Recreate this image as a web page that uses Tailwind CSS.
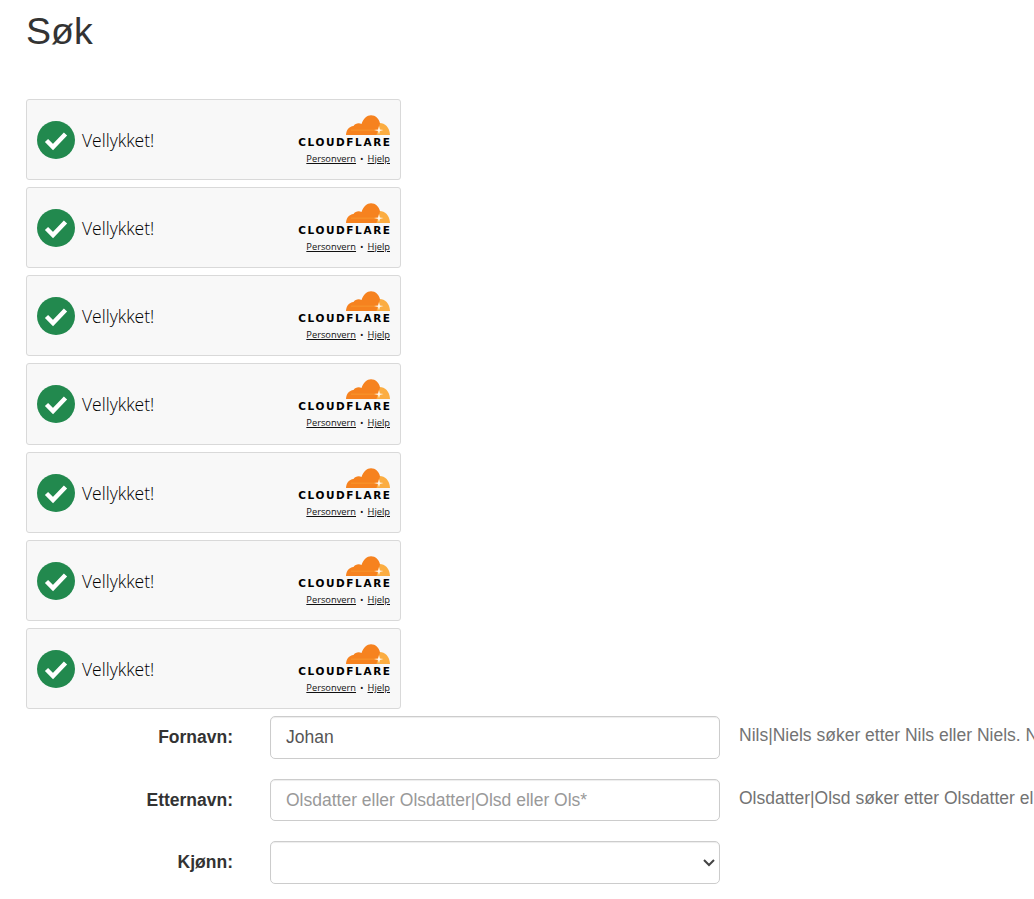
<!DOCTYPE html>
<html lang="no">
<head>
    <meta charset="utf-8">
    <title>Søk</title>
    <script src="https://cdn.jsdelivr.net/npm/@tailwindcss/browser@4"></script>
</head>
<body class="bg-white overflow-hidden h-[899px] font-['Liberation_Sans',sans-serif] text-[17.5px] text-[#333]">
    <svg class="hidden">
        <symbol id="ok" viewBox="0 0 38 38">
            <circle cx="19" cy="19" r="19" fill="#22894e"/>
            <path d="M9.500 19.500l6.500 6.500 12.500-13" fill="none" stroke="#fff" stroke-width="4.500"/>
        </symbol>
        <symbol id="cf" viewBox="0 0 44 20">
            <path d="M31 8.500c6-1.800 12.500 2.500 13 11.500H29z" fill="#fbad41"/>
            <path d="M0 20c.3-5 3-8.500 7.500-9 1.500-2.200 5-3.500 8-2C17.500 3.500 21 .2 25 .2c4.500 0 8 3.300 9 8-.8 3-1.500 6.300-2.500 8L30.500 20z" fill="#f6821f"/>
            <path d="M5 14.700h26v.8H5z" fill="#fbad41" opacity=".6"/>
            <path d="M28 15.100l4-.7 1-3.400 .9 3.400 3.600.7-3.600.8-.9 3.400-1-3.400z" fill="#fff" opacity=".9"/>
        </symbol>
    </svg>

    <main class="pl-[26px]">
        <h1 class="text-[37.5px] leading-[41px] font-normal pt-[11px] mb-[46.6px]">Søk</h1>

        <div class="w-[375px]">
            <div class="h-[81.25px] mb-[7px] flex items-center justify-between pl-[10px] pr-[10px] bg-[#f8f8f8] border border-[#d9d9d9] rounded-[3px]">
                <div class="flex items-center gap-[7px] pt-[1px]">
                    <svg class="w-[38px] h-[38px]"><use href="#ok"/></svg>
                    <span class="font-['Open_Sans',sans-serif] font-light text-[17.5px] text-black">Vellykket!</span>
                </div>
                <div class="flex flex-col items-end pt-[1px]">
                    <svg class="w-[44px] h-[20px]"><use href="#cf"/></svg>
                    <span class="font-['DejaVu_Sans',sans-serif] font-bold text-[10.500px] leading-[12px] tracking-[1.600px] text-black mr-[-1.600px] mt-[1px]">CLOUDFLARE</span>
                    <div class="flex items-center gap-[4px] mt-[5px] font-['Open_Sans',sans-serif] text-[9.300px] leading-[12px] text-[#111]"><a class="underline">Personvern</a><span>•</span><a class="underline">Hjelp</a></div>
                </div>
            </div>
            <div class="h-[81.25px] mb-[7px] flex items-center justify-between pl-[10px] pr-[10px] bg-[#f8f8f8] border border-[#d9d9d9] rounded-[3px]">
                <div class="flex items-center gap-[7px] pt-[1px]">
                    <svg class="w-[38px] h-[38px]"><use href="#ok"/></svg>
                    <span class="font-['Open_Sans',sans-serif] font-light text-[17.5px] text-black">Vellykket!</span>
                </div>
                <div class="flex flex-col items-end pt-[1px]">
                    <svg class="w-[44px] h-[20px]"><use href="#cf"/></svg>
                    <span class="font-['DejaVu_Sans',sans-serif] font-bold text-[10.500px] leading-[12px] tracking-[1.600px] text-black mr-[-1.600px] mt-[1px]">CLOUDFLARE</span>
                    <div class="flex items-center gap-[4px] mt-[5px] font-['Open_Sans',sans-serif] text-[9.300px] leading-[12px] text-[#111]"><a class="underline">Personvern</a><span>•</span><a class="underline">Hjelp</a></div>
                </div>
            </div>
            <div class="h-[81.25px] mb-[7px] flex items-center justify-between pl-[10px] pr-[10px] bg-[#f8f8f8] border border-[#d9d9d9] rounded-[3px]">
                <div class="flex items-center gap-[7px] pt-[1px]">
                    <svg class="w-[38px] h-[38px]"><use href="#ok"/></svg>
                    <span class="font-['Open_Sans',sans-serif] font-light text-[17.5px] text-black">Vellykket!</span>
                </div>
                <div class="flex flex-col items-end pt-[1px]">
                    <svg class="w-[44px] h-[20px]"><use href="#cf"/></svg>
                    <span class="font-['DejaVu_Sans',sans-serif] font-bold text-[10.500px] leading-[12px] tracking-[1.600px] text-black mr-[-1.600px] mt-[1px]">CLOUDFLARE</span>
                    <div class="flex items-center gap-[4px] mt-[5px] font-['Open_Sans',sans-serif] text-[9.300px] leading-[12px] text-[#111]"><a class="underline">Personvern</a><span>•</span><a class="underline">Hjelp</a></div>
                </div>
            </div>
            <div class="h-[81.25px] mb-[7px] flex items-center justify-between pl-[10px] pr-[10px] bg-[#f8f8f8] border border-[#d9d9d9] rounded-[3px]">
                <div class="flex items-center gap-[7px] pt-[1px]">
                    <svg class="w-[38px] h-[38px]"><use href="#ok"/></svg>
                    <span class="font-['Open_Sans',sans-serif] font-light text-[17.5px] text-black">Vellykket!</span>
                </div>
                <div class="flex flex-col items-end pt-[1px]">
                    <svg class="w-[44px] h-[20px]"><use href="#cf"/></svg>
                    <span class="font-['DejaVu_Sans',sans-serif] font-bold text-[10.500px] leading-[12px] tracking-[1.600px] text-black mr-[-1.600px] mt-[1px]">CLOUDFLARE</span>
                    <div class="flex items-center gap-[4px] mt-[5px] font-['Open_Sans',sans-serif] text-[9.300px] leading-[12px] text-[#111]"><a class="underline">Personvern</a><span>•</span><a class="underline">Hjelp</a></div>
                </div>
            </div>
            <div class="h-[81.25px] mb-[7px] flex items-center justify-between pl-[10px] pr-[10px] bg-[#f8f8f8] border border-[#d9d9d9] rounded-[3px]">
                <div class="flex items-center gap-[7px] pt-[1px]">
                    <svg class="w-[38px] h-[38px]"><use href="#ok"/></svg>
                    <span class="font-['Open_Sans',sans-serif] font-light text-[17.5px] text-black">Vellykket!</span>
                </div>
                <div class="flex flex-col items-end pt-[1px]">
                    <svg class="w-[44px] h-[20px]"><use href="#cf"/></svg>
                    <span class="font-['DejaVu_Sans',sans-serif] font-bold text-[10.500px] leading-[12px] tracking-[1.600px] text-black mr-[-1.600px] mt-[1px]">CLOUDFLARE</span>
                    <div class="flex items-center gap-[4px] mt-[5px] font-['Open_Sans',sans-serif] text-[9.300px] leading-[12px] text-[#111]"><a class="underline">Personvern</a><span>•</span><a class="underline">Hjelp</a></div>
                </div>
            </div>
            <div class="h-[81.25px] mb-[7px] flex items-center justify-between pl-[10px] pr-[10px] bg-[#f8f8f8] border border-[#d9d9d9] rounded-[3px]">
                <div class="flex items-center gap-[7px] pt-[1px]">
                    <svg class="w-[38px] h-[38px]"><use href="#ok"/></svg>
                    <span class="font-['Open_Sans',sans-serif] font-light text-[17.5px] text-black">Vellykket!</span>
                </div>
                <div class="flex flex-col items-end pt-[1px]">
                    <svg class="w-[44px] h-[20px]"><use href="#cf"/></svg>
                    <span class="font-['DejaVu_Sans',sans-serif] font-bold text-[10.500px] leading-[12px] tracking-[1.600px] text-black mr-[-1.600px] mt-[1px]">CLOUDFLARE</span>
                    <div class="flex items-center gap-[4px] mt-[5px] font-['Open_Sans',sans-serif] text-[9.300px] leading-[12px] text-[#111]"><a class="underline">Personvern</a><span>•</span><a class="underline">Hjelp</a></div>
                </div>
            </div>
            <div class="h-[81.25px] mb-[7px] flex items-center justify-between pl-[10px] pr-[10px] bg-[#f8f8f8] border border-[#d9d9d9] rounded-[3px]">
                <div class="flex items-center gap-[7px] pt-[1px]">
                    <svg class="w-[38px] h-[38px]"><use href="#ok"/></svg>
                    <span class="font-['Open_Sans',sans-serif] font-light text-[17.5px] text-black">Vellykket!</span>
                </div>
                <div class="flex flex-col items-end pt-[1px]">
                    <svg class="w-[44px] h-[20px]"><use href="#cf"/></svg>
                    <span class="font-['DejaVu_Sans',sans-serif] font-bold text-[10.500px] leading-[12px] tracking-[1.600px] text-black mr-[-1.600px] mt-[1px]">CLOUDFLARE</span>
                    <div class="flex items-center gap-[4px] mt-[5px] font-['Open_Sans',sans-serif] text-[9.300px] leading-[12px] text-[#111]"><a class="underline">Personvern</a><span>•</span><a class="underline">Hjelp</a></div>
                </div>
            </div>
        </div>

        <form class="flex flex-col gap-[20px]">
            <div class="flex items-center">
                <label class="w-[207px] shrink-0 text-right font-bold">Fornavn:</label>
                <input type="text" value="Johan" class="ml-[37px] w-[450px] shrink-0 h-[42.5px] px-[15px] bg-white border border-[#ccc] rounded-[5px] text-[#555] shadow-[inset_0_1px_1px_rgba(0,0,0,0.075)]">
                <span class="ml-[19px] mb-[4px] whitespace-nowrap text-[#737373]">Nils|Niels søker etter Nils eller Niels. N</span>
            </div>
            <div class="flex items-center">
                <label class="w-[207px] shrink-0 text-right font-bold">Etternavn:</label>
                <input type="text" placeholder="Olsdatter eller Olsdatter|Olsd eller Ols*" class="ml-[37px] w-[450px] shrink-0 h-[42.5px] px-[15px] bg-white border border-[#ccc] rounded-[5px] text-[#555] placeholder:text-[#999] shadow-[inset_0_1px_1px_rgba(0,0,0,0.075)]">
                <span class="ml-[19px] mb-[4px] whitespace-nowrap text-[#737373]">Olsdatter|Olsd søker etter Olsdatter el</span>
            </div>
            <div class="flex items-center">
                <label class="w-[207px] shrink-0 text-right font-bold">Kjønn:</label>
                <div class="relative ml-[37px] w-[450px] shrink-0">
                    <select class="block appearance-none w-full h-[42.5px] px-[15px] bg-white border border-[#ccc] rounded-[5px] text-[#555] shadow-[inset_0_1px_1px_rgba(0,0,0,0.075)]">
                        <option></option>
                        <option>Mann</option>
                        <option>Kvinne</option>
                    </select>
                    <svg class="absolute right-[3px] top-[17px] w-[16px] h-[10px] pointer-events-none" viewBox="0 0 16 10"><path d="M3 2l5 5 5-5" fill="none" stroke="#444" stroke-width="2"/></svg>
                </div>
            </div>
        </form>
    </main>
</body>
</html>
